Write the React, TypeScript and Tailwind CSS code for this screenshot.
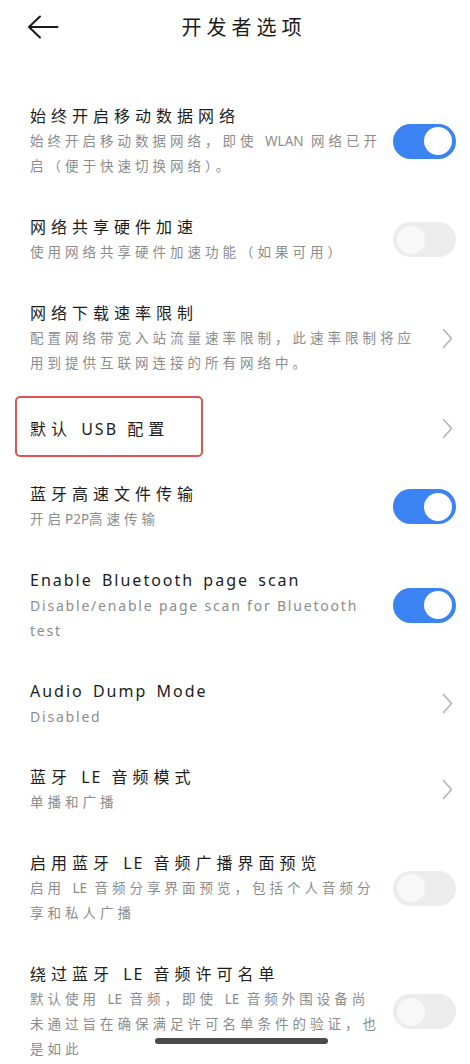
import React from 'react'

type Ctl = 'on' | 'off' | 'chev'

type Row = {
  title: string
  sub?: string
  ctl: Ctl
  boxed?: boolean
  latinSub?: boolean
}

const rows: Row[] = [
  { title: '始终开启移动数据网络', sub: '始终开启移动数据网络，即使 WLAN 网络已开启（便于快速切换网络）。', ctl: 'on' },
  { title: '网络共享硬件加速', sub: '使用网络共享硬件加速功能（如果可用）', ctl: 'off' },
  { title: '网络下载速率限制', sub: '配置网络带宽入站流量速率限制，此速率限制将应用到提供互联网连接的所有网络中。', ctl: 'chev' },
  { title: '默认 USB 配置', ctl: 'chev', boxed: true },
  { title: '蓝牙高速文件传输', sub: '开启P2P高速传输', ctl: 'on' },
  { title: 'Enable Bluetooth page scan', sub: 'Disable/enable page scan for Bluetooth test', ctl: 'on', latinSub: true },
  { title: 'Audio Dump Mode', sub: 'Disabled', ctl: 'chev', latinSub: true },
  { title: '蓝牙 LE 音频模式', sub: '单播和广播', ctl: 'chev' },
  { title: '启用蓝牙 LE 音频广播界面预览', sub: '启用 LE 音频分享界面预览，包括个人音频分享和私人广播', ctl: 'off' },
  {
    title: '绕过蓝牙 LE 音频许可名单',
    sub: '默认使用 LE 音频，即使 LE 音频外围设备尚未通过旨在确保满足许可名单条件的验证，也是如此',
    ctl: 'off',
  },
]

// latin runs get tighter tracking than the CJK glyphs around them
function Mixed({ text, latin }: { text: string; latin: string }) {
  const parts = text.split(/([A-Za-z0-9/]+)/)
  return (
    <>
      {parts.map((p, i) =>
        i % 2 === 1 ? (
          <span key={i} className={latin}>
            {p}
          </span>
        ) : (
          <React.Fragment key={i}>{p}</React.Fragment>
        )
      )}
    </>
  )
}

function Toggle({ on }: { on: boolean }) {
  return (
    <div
      className={
        on
          ? 'w-[63px] h-[35px] rounded-full bg-[#3b82f2] flex items-center justify-end px-[4px] shrink-0'
          : 'w-[63px] h-[35px] rounded-full bg-[#ececec] flex items-center justify-start px-[4px] shrink-0'
      }
    >
      <div className={on ? 'w-[28px] h-[28px] rounded-full bg-white' : 'w-[28px] h-[28px] rounded-full bg-[#f8f8f8]'} />
    </div>
  )
}

function Chevron() {
  return (
    <div className="w-[20px] flex justify-end pr-[3px] shrink-0">
      <svg width="11" height="21" viewBox="0 0 11 21" fill="none">
        <path d="M1.5 1.5 L9.5 10.5 L1.5 19.5" stroke="#b4b4b4" strokeWidth="1.6" strokeLinecap="round" strokeLinejoin="round" />
      </svg>
    </div>
  )
}

export default function App() {
  return (
    <div className="relative h-[1064px] overflow-hidden bg-white font-['Noto_Sans','Noto_Sans_CJK_SC',sans-serif]">
      {/* Header */}
      <div className="h-[54px] flex items-center relative">
        <div className="absolute left-[27px] top-[15px]">
          <svg width="32" height="24" viewBox="0 0 32 24" fill="none">
            <path d="M13 1.5 L2 12 L13 22.5 M2 12 H30.5" stroke="#1a1a1a" strokeWidth="2" strokeLinecap="round" strokeLinejoin="round" />
          </svg>
        </div>
        <div className="flex-1 flex justify-center pl-[18px] pt-[2px]">
          <span className="text-[20px] leading-[26px] tracking-[5px] text-[#1a1a1a]">开发者选项</span>
        </div>
      </div>

      {/* Settings list */}
      <div className="pt-[31.5px]">
        {rows.map((r, i) => (
          <div
            key={i}
            className={
              r.sub
                ? 'relative flex items-center pl-[30px] pr-[14px] py-[17.5px]'
                : 'relative flex items-center pl-[30px] pr-[14px] h-[70px]'
            }
          >
            {r.boxed && (
              <div className="absolute left-[15px] top-[2px] w-[188px] h-[61px] border-2 border-[#e2544f] rounded-[5px]" />
            )}
            <div className={r.ctl === 'chev' ? 'flex-1 min-w-0 mr-[16px]' : 'flex-1 min-w-0 mr-[10px]'}>
              <div className="text-[16px] leading-[26px] tracking-[5px] text-[#1c1c1c]">
                <Mixed text={r.title} latin="tracking-[2px]" />
              </div>
              {r.sub &&
                (r.latinSub ? (
                  <div className="text-[14px] leading-[25px] tracking-[1.8px] text-[#8c8c8c]">{r.sub}</div>
                ) : (
                  <div className="text-[13.5px] leading-[25px] tracking-[4px] text-[#8c8c8c]">
                    <Mixed text={r.sub} latin="tracking-[0px]" />
                  </div>
                ))}
            </div>
            {r.ctl === 'chev' ? <Chevron /> : <Toggle on={r.ctl === 'on'} />}
          </div>
        ))}
      </div>

      {/* Home indicator */}
      <div className="absolute left-[155px] top-[1038px] w-[173px] h-[6px] rounded-full bg-[#4a4a4a]" />
    </div>
  )
}
